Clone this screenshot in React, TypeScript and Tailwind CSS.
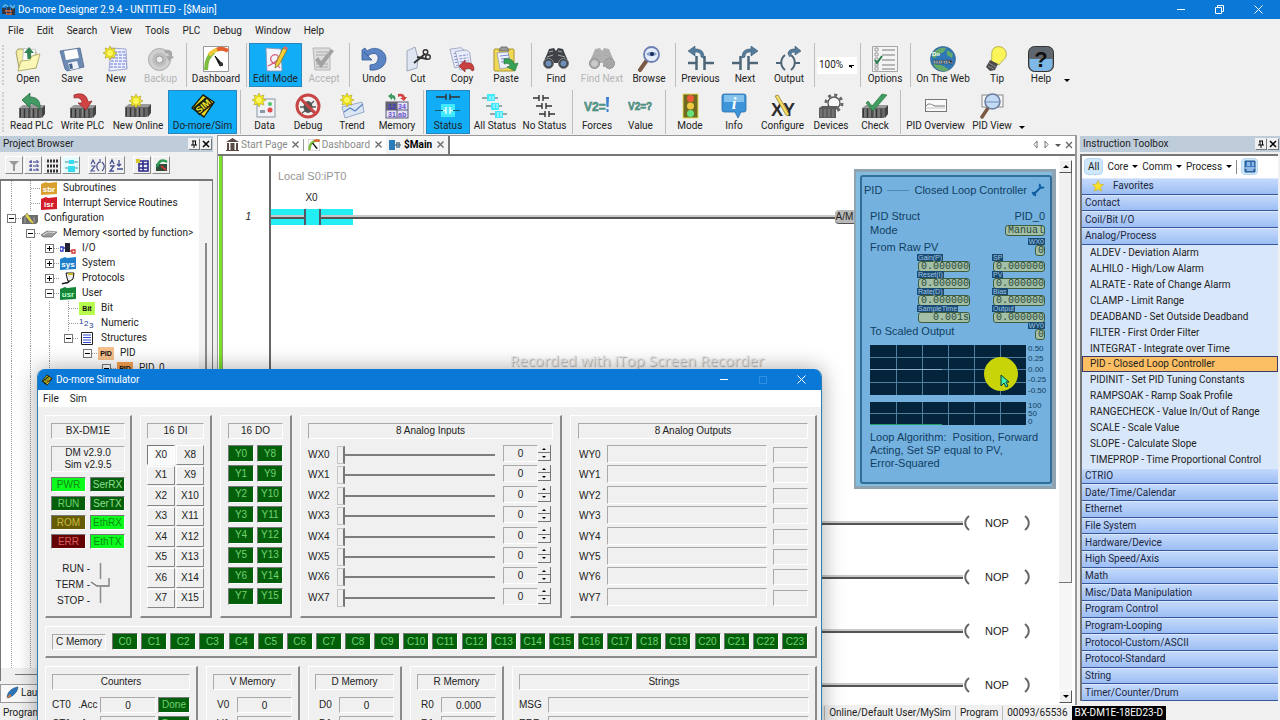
import React from 'react';

/* ---------- shared icon pieces ---------- */

const Svg = ({ children, className = 'h-[26px] w-[26px]', box = '0 0 26 26' }: { children: React.ReactNode; className?: string; box?: string }) => (
  <svg viewBox={box} className={`shrink-0 ${className}`} fill="none" aria-hidden="true">
    {children}
  </svg>
);

const Sun = ({ x = 0, y = 0 }: { x?: number; y?: number }) => (
  <g transform={`translate(${x} ${y})`}>
    <path d="M7 0l1.5 3.2L12 2l-1.2 3.5L14 7l-3.2 1.5L12 12l-3.5-1.2L7 14l-1.5-3.2L2 12l1.2-3.5L0 7l3.2-1.5L2 2l3.5 1.2z" fill="#fbf01a" stroke="#a79a20" strokeWidth=".6" />
    <circle cx="7" cy="7" r="3.6" fill="#fdf85a" stroke="#c9b400" strokeWidth=".5" />
  </g>
);

const Rack = ({ x = 0, y = 0 }: { x?: number; y?: number }) => (
  <g transform={`translate(${x} ${y})`}>
    <path d="M0 4l4-3h22l-3 3z" fill="#9a9a9a" />
    <path d="M0 4h23v9l-1 1H0z" fill="#666" />
    <path d="M23 4l3-3v9l-3 4z" fill="#444" />
    <path d="M1.5 5v8M5.5 5v9M10 5v9M14.500 5v9M19 5v9" stroke="#333" />
    <path d="M3 5v8M8 5v8M12.500 5v8M17 5v8" stroke="#888" />
  </g>
);

const Sheet = ({ x = 0, y = 0, tint = '#3a56d0' }: { x?: number; y?: number; tint?: string }) => (
  <g transform={`translate(${x} ${y})`}>
    <path d="M1 1h11l3 3v16H3z" fill="#e9edfb" stroke="#8a93b5" strokeWidth=".7" />
    <path d="M4 6h9M4 9h9M4 12h9M4 15h9M5 18h8" stroke={tint} strokeWidth=".9" strokeDasharray="3 1" />
  </g>
);

const Binoculars = ({ c = '#3f4246', lens = '#6f8fb8' }: { c?: string; lens?: string }) => (
  <g>
    <path d="M4 8l2-5 5-1 2 3 2-3 5 1 2 5 4 9-3 5h-5l-3-5h-4l-3 5H3l-3-5z" fill={c} />
    <circle cx="5.500" cy="17.500" r="5" fill={c} stroke="#8b8b8b" />
    <circle cx="20.500" cy="17.500" r="5" fill={c} stroke="#8b8b8b" />
    <circle cx="5.500" cy="17.500" r="3" fill={lens} />
    <circle cx="20.500" cy="17.500" r="3" fill={lens} />
    <path d="M6 6l4-1M15 5l4 1M4 11l6-2M15 9l7 2" stroke="#a9a9a9" />
  </g>
);

const Wires = ({ kind }: { kind: 'prev' | 'next' | 'out' }) => (
  <Svg>
    {kind === 'out' ? (
      <>
        <path d="M0 17h6M19 17h5" stroke="#4c6577" strokeWidth="2" />
        <path d="M9 9c-5 4-5 11 0 15M15 9c5 4 5 11 0 15" stroke="#4c6577" strokeWidth="2" />
        <path d="M12 8c0-4 3-5 7-5V0l6 5-6 4V6c-3 0-4 1-5 5z" fill="#547b9a" stroke="#395a73" strokeWidth=".6" />
      </>
    ) : (
      <>
        <path d="M0 17h8M17 17h9M8.500 10v14M16.500 10v14" stroke="#4c6577" strokeWidth="2.500" />
        {kind === 'prev' ? (
          <path d="M0 5l7-5v3c6 0 9 2 9 9l-3-1c0-4-2-5-6-5v4z" fill="#547b9a" stroke="#395a73" strokeWidth=".6" />
        ) : (
          <path d="M26 5l-7-5v3c-6 0-9 2-9 9l3-1c0-4 2-5 6-5v4z" fill="#547b9a" stroke="#395a73" strokeWidth=".6" />
        )}
      </>
    )}
  </Svg>
);

const Contact = ({ x, y, c }: { x: number; y: number; c: string }) => (
  <path d={`M${x} ${y}h6m4 0h6M${x + 6} ${y - 3}v6M${x + 10} ${y - 3}v6`} stroke={c} strokeWidth="1.400" />
);

const icons: Record<string, React.ReactNode> = {
  open: (
    <Svg>
      <path d="M1 6l2-3h5l2 3h11v16H4z" fill="#f3eda6" stroke="#938c4b" strokeWidth=".8" />
      <path d="M8 3h12v16H8z" fill="#fff" stroke="#a9a9a9" strokeWidth=".6" transform="rotate(5 14 10)" />
      <path d="M9 7l5-6 5 6h-3l.5 6h-4l-.5-6z" fill="#358455" />
      <path d="M3 25l3-10 9-1 2-4 8-2-4 14z" fill="#fbf7b6" stroke="#a9a155" strokeWidth=".8" />
    </Svg>
  ),
  save: (
    <Svg>
      <path d="M1 5l20-3 4 19-17 4-2-2z" fill="#6d8bb2" stroke="#4c688e" strokeWidth=".8" />
      <path d="M5 5l13-2 2 9-13 2z" fill="#fff" />
      <path d="M9 17l9-2 2 7-9 2z" fill="#eef2f8" />
      <path d="M10 18l3-.6 1 5-3 .6z" fill="#43618a" />
    </Svg>
  ),
  fresh: (
    <Svg>
      <path d="M8 2l15 1 1 20-18 2z" fill="#eceffd" stroke="#7d88c0" strokeWidth=".7" />
      <path d="M8 9h15M8 12h15M8 15h15M7 18h17M7 21h17M11 6h12" stroke="#6878d4" strokeWidth="1" strokeDasharray="3 1" />
      <Sun />
    </Svg>
  ),
  backup: (
    <Svg>
      <circle cx="11.500" cy="13.500" r="11" fill="#cfcfcf" stroke="#aaa" />
      <circle cx="11.500" cy="13.500" r="7" fill="#bdbdbd" />
      <circle cx="11.500" cy="13.500" r="3.500" fill="#eee" stroke="#999" />
      <path d="M16 4c6-1 9 1 8 6l2 1-5 4-3-5 3 0c0-2-1-3-4-3z" fill="#a8a8a8" />
    </Svg>
  ),
  gauge: (
    <Svg>
      <path d="M.5.500h25v25H.5z" fill="#fff" stroke="#999" />
      <path d="M3 24C3 14 6 9 11 6" stroke="#7cbc3e" strokeWidth="4" />
      <path d="M6 9C9 6 12 4 15 3.500" stroke="#efc93b" strokeWidth="4" />
      <path d="M14 3.500C18 2 21 2 25 5" stroke="#e56030" strokeWidth="4" />
      <path d="M12 10l8 9-3 1z" fill="#111" stroke="#111" />
      <circle cx="18" cy="18" r="2" fill="#333" />
    </Svg>
  ),
  edit: (
    <Svg>
      <path d="M3 2l15 1 1 22H4z" fill="#f4f4fb" stroke="#8c93b0" strokeWidth=".8" />
      <path d="M5 20c4-2 12-5 10-10-3-4-10 1-6 6 2 2 6 2 8 6" stroke="#d85a74" strokeWidth="1.200" />
      <path d="M20 2l4 2-8 15-4 3 1-5z" fill="#f4cf3a" stroke="#7f6d25" strokeWidth=".8" />
      <path d="M20 2l4 2 1-2-3-2z" fill="#df6d6d" />
    </Svg>
  ),
  accept: (
    <Svg>
      <path d="M2 2h17v22H4z" fill="#ddd" stroke="#b5b5b5" />
      <path d="M5 6h12M5 9h12M5 18h12M5 21h12" stroke="#aaa" />
      <path d="M4 14l6 8L23 5l-3-2-10 12-3-4z" fill="#a2a2a2" />
    </Svg>
  ),
  undo: (
    <Svg>
      <path d="M3 6l4 4c8-7 14 2 7 8l-5 1v5c9 1 16-4 16-11C25 4 14-1 6 5L4 2 1 4v10h10z" fill="#5b84c4" stroke="#365b98" strokeWidth=".8" />
    </Svg>
  ),
  cut: (
    <Svg>
      <path d="M2 5l8-4 3 11-1 10-10 3z" fill="#dfe5f1" stroke="#8b95aa" strokeWidth=".8" />
      <path d="M9 17l11-9M12 11l10 2" stroke="#333" strokeWidth="2" />
      <circle cx="20.500" cy="6" r="2.300" stroke="#333" strokeWidth="1.400" />
      <circle cx="23" cy="11" r="2.300" stroke="#333" strokeWidth="1.400" />
    </Svg>
  ),
  copy: (
    <Svg>
      <g transform="rotate(-8 10 10)">
        <Sheet x={1} y={1} tint="#7f8fc4" />
        <Sheet x={6} y={4} tint="#7f8fc4" />
      </g>
      <path d="M10 20l6-6v3c6-1 9 1 9 7l-2 1c-1-3-4-3-7-2v3z" fill="#c9413f" stroke="#8d2727" strokeWidth=".6" />
    </Svg>
  ),
  paste: (
    <Svg>
      <rect x="1" y="3" width="20" height="22" rx="1" fill="#f0d956" stroke="#a9932b" />
      <path d="M6 5l2-4h6l2 4z" fill="#9a9a9a" stroke="#555" strokeWidth=".7" />
      <path d="M4 7l11-1 3 15-11 2z" fill="#eef1fa" stroke="#8792b5" strokeWidth=".7" />
      <path d="M7 10l9-1M8 13l9-1M8 16l9-1" stroke="#7b8ccf" />
      <path d="M11 13c7-1 10 2 10 5l4-1-3 8-8-4 3-1c0-2-2-3-6-2z" fill="#35a255" stroke="#1e6c36" strokeWidth=".6" />
    </Svg>
  ),
  find: <Svg><Binoculars /></Svg>,
  findNext: (
    <Svg>
      <Binoculars c="#b0b0b0" lens="#cbcbcb" />
      <path d="M14 15h6v-3l6 6-6 6v-3h-6z" fill="#a6a6a6" />
    </Svg>
  ),
  browse: (
    <Svg>
      <path d="M11 14l-7 10" stroke="#7c5a45" strokeWidth="4" strokeLinecap="round" />
      <circle cx="15.500" cy="8.500" r="7.500" fill="#e4edfb" stroke="#6d7fb1" strokeWidth="1.800" />
      <path d="M10 8c3-3 8-3 11 0-3 3-8 3-11 0z" fill="#8ba3d2" />
      <circle cx="16" cy="8" r="2" fill="#1b2a55" />
    </Svg>
  ),
  options: (
    <Svg>
      <path d="M.5.500h25v25H.5z" fill="#f4f4f4" stroke="#a5a5a5" />
      <path d="M10 4h13M10 9h13M10 14h13M10 19h13M10 23h13" stroke="#7b7b7b" strokeWidth="1.200" />
      <path d="M3 2h3v3H3zM3 7h3v3H3zM3 12h3v3H3zM3 17h3v3H3zM3 21h3v3H3z" stroke="#888" strokeWidth=".8" />
      <path d="M3 14l2 3 5-7" stroke="#2c7d4d" strokeWidth="2" />
    </Svg>
  ),
  web: (
    <Svg>
      <circle cx="13" cy="13" r="12.500" fill="#2f78b8" stroke="#3e5f7c" strokeWidth=".7" />
      <path d="M4 6c4-4 8-5 12-4l-2 4-5 2-4 4-3-1zM17 4l6 4-1 4-5-3zM3 18c7 0 12 2 16 6-6 3-13 0-16-6z" fill="#63aa6b" />
      <text x="2" y="10" fontFamily="Liberation Sans" fontSize="6" fontWeight="700" fill="#fff">Do</text>
      <text x="13" y="18" textAnchor="middle" fontFamily="Liberation Sans" fontSize="8" fontWeight="700" fill="#fff" stroke="#222" strokeWidth=".4">more</text>
    </Svg>
  ),
  tip: (
    <Svg>
      <path d="M10 2c6-4 14 1 12 8-1 4-5 5-7 9l-8-4c2-4-1-9 3-13z" fill="#fbf55a" stroke="#a9a13b" strokeWidth=".8" />
      <path d="M6 14l8 4-3 6-5 1-4-4z" fill="#4b4b4b" />
      <path d="M5 17l7 4M4 20l6 3" stroke="#8b8b8b" />
    </Svg>
  ),
  help: (
    <Svg>
      <rect x=".5" y=".5" width="25" height="25" rx="6" fill="#60666d" stroke="#333" />
      <path d="M1.500 13h23v6a6 6 0 01-6 6h-11a6 6 0 01-6-6z" fill="#7db8e6" />
      <text x="13" y="21" textAnchor="middle" fontFamily="Liberation Sans" fontSize="22" fontWeight="700" fill="#111">?</text>
    </Svg>
  ),
  readPlc: (
    <Svg>
      <Rack y={11} />
      <path d="M3 7l8-7v4c8 0 11 5 10 13-2-4-5-6-10-6v4z" fill="#419963" stroke="#24633c" strokeWidth=".7" />
    </Svg>
  ),
  writePlc: (
    <Svg>
      <Rack y={11} />
      <path d="M4 2c8-3 13 0 14 7l4-1-6 9-8-7 4 0c0-4-3-6-8-5z" fill="#d24444" stroke="#8c2323" strokeWidth=".7" />
    </Svg>
  ),
  newOnline: (
    <Svg>
      <Rack y={10} />
      <Sun x={4} y={1} />
    </Svg>
  ),
  sim: (
    <Svg>
      <path d="M13 1l12 8-11 16L1 15z" fill="#1c1c10" />
      <path d="M13 3l10 6-9 14-11-8z" fill="#e4db25" />
      <g transform="rotate(-40 13 13)">
        <rect x="4" y="8" width="18" height="10" fill="#1c1c10" />
        <text x="13" y="16.500" textAnchor="middle" fontFamily="Liberation Sans" fontSize="9" fontWeight="700" fill="#f3ea2b">SIM</text>
      </g>
    </Svg>
  ),
  data: (
    <Svg>
      <rect x="5" y="6" width="18" height="18" fill="#f0f2f6" stroke="#8a93a5" />
      <circle cx="18" cy="11" r="2" fill="#55c46a" />
      <circle cx="18" cy="17" r="2.500" fill="#e24d4d" />
      <path d="M8 17h5v3H8z" fill="#8f98a9" />
      <Sun />
    </Svg>
  ),
  debug: (
    <Svg>
      <ellipse cx="13" cy="14" rx="4.500" ry="6" fill="#555" />
      <path d="M7 8l4 4M19 8l-4 4M5 14h16M7 20l4-3M19 20l-4-3" stroke="#555" strokeWidth="1.300" />
      <circle cx="13" cy="13" r="11" stroke="#c84545" strokeWidth="3" />
      <path d="M5 5l16 16" stroke="#c84545" strokeWidth="3" />
    </Svg>
  ),
  trend: (
    <Svg>
      <path d="M3 14l20-5 2 10-19 6z" fill="#dbe6f5" stroke="#8298ba" strokeWidth=".8" />
      <path d="M5 19l6-4 5 3 8-7" stroke="#5c83c2" strokeWidth="1.200" />
      <Sun x={1} />
    </Svg>
  ),
  memory: (
    <Svg>
      <rect x="2" y="9" width="22" height="16" fill="#e5e3f5" stroke="#5d5a78" />
      <path d="M2 9h11v8H2z" fill="#65636f" />
      <path d="M2 17h22M13 9v16" stroke="#5d5a78" />
      <text x="4" y="16" fontFamily="Liberation Sans" fontSize="7" fontWeight="700" fill="#3b3bd0">12</text>
      <text x="14" y="16" fontFamily="Liberation Sans" fontSize="7" fontWeight="700" fill="#6b52d0">34</text>
      <text x="4" y="24" fontFamily="Liberation Sans" fontSize="7" fontWeight="700" fill="#6b52d0">31</text>
      <text x="14" y="24" fontFamily="Liberation Sans" fontSize="7" fontWeight="700" fill="#6b52d0">ab</text>
      <path d="M4 3l4-3v2c3 0 4 2 3 6-1-2-2-3-3-3v2z" fill="#419963" />
      <path d="M14 1c4-1 6 0 7 3l2 0-3 4-4-3h2c0-2-2-2-4-1z" fill="#d24444" />
    </Svg>
  ),
  status: (
    <Svg>
      <Contact x={5} y={4} c="#333" />
      <path d="M1 4h4M21 4h4" stroke="#333" strokeWidth="1.400" />
      <rect x="6" y="11" width="14" height="13" fill="#42e9fb" />
      <path d="M0 17.500h8M18 17.500h7" stroke="#15606b" strokeWidth="1.200" />
      <path d="M11 14v7M15 14v7M8 17.500h3M15 17.500h3" stroke="#e8fdff" strokeWidth="1.500" />
    </Svg>
  ),
  allStatus: (
    <Svg>
      <path d="M5 1h8v7H5zM9 10h8v7H9zM13 18h8v7h-8z" fill="#42e9fb" />
      <path d="M0 5h5M13 5h3M4 13h5M17 13h3M8 21h5M21 21h4" stroke="#35646b" strokeWidth="1.200" />
      <path d="M8 3v4M11 3v4M12 11v4M15 11v4M16 19v5M19 19v5" stroke="#c8fbff" />
    </Svg>
  ),
  noStatus: (
    <Svg>
      <Contact x={1} y={5} c="#333" />
      <Contact x={4} y={13} c="#333" />
      <Contact x={7} y={21} c="#333" />
    </Svg>
  ),
  forces: (
    <Svg>
      <text x="0" y="18" fontFamily="Liberation Sans" fontSize="12" fontWeight="700" fill="#5ba394" stroke="#3b7a6d" strokeWidth=".5">V2=</text>
      <path d="M22 4h3l-.5 10h-2zM22.500 16h2v3h-2z" fill="#3c7fd0" />
    </Svg>
  ),
  value: (
    <Svg>
      <text x="0" y="17" fontFamily="Liberation Sans" fontSize="10" fontWeight="700" fill="#5ba394" stroke="#3b7a6d" strokeWidth=".5">V2=?</text>
    </Svg>
  ),
  mode: (
    <Svg>
      <rect x="6" y="1" width="15" height="24" fill="#6f6a20" stroke="#e6dc5b" />
      <circle cx="13.500" cy="5.500" r="3.500" fill="#ef5b3a" />
      <circle cx="13.500" cy="13" r="3.500" fill="#eec93f" />
      <circle cx="13.500" cy="20.500" r="3.500" fill="#65e07a" />
    </Svg>
  ),
  info: (
    <Svg>
      <path d="M3 1h20a2 2 0 012 2v14a2 2 0 01-2 2h-3l-3 6-3-6H3a2 2 0 01-2-2V3a2 2 0 012-2z" fill="#3d94d8" stroke="#2b6ea8" strokeWidth=".8" />
      <path d="M3 2h20v7H3z" fill="#85c3ee" />
      <text x="13" y="16" textAnchor="middle" fontFamily="Liberation Serif" fontStyle="italic" fontSize="17" fontWeight="700" fill="#fff">i</text>
    </Svg>
  ),
  configure: (
    <Svg>
      <text x="1" y="23" fontFamily="Liberation Sans" fontSize="18" fontWeight="700" fill="#2c2c2c">XY</text>
      <path d="M5 3l3-1 11 19-1 2-2-1z" fill="#f1dd63" stroke="#88762b" strokeWidth=".7" />
    </Svg>
  ),
  devices: (
    <Svg>
      <circle cx="16" cy="10" r="6" fill="#f5f5f5" stroke="#555" strokeWidth="1.300" />
      <circle cx="16" cy="10" r="8" stroke="#666" strokeWidth="3" strokeDasharray="3 3.280" />
      <g transform="translate(0 11)">
        <path d="M1 4l3-2h16l-2 3v9H1z" fill="#5d5d5d" />
        <path d="M3 5v8M7 5v8M11 5v8M15 5v8" stroke="#8b8b8b" />
      </g>
    </Svg>
  ),
  check: (
    <Svg>
      <Rack y={11} />
      <path d="M6 8l4 5L20 1l5 1-14 16-7-8z" fill="#3f9e5f" stroke="#26683b" strokeWidth=".6" />
    </Svg>
  ),
  pidOverview: (
    <Svg>
      <rect x="2.500" y="6.500" width="21" height="12" fill="#fafafa" stroke="#777" />
      <path d="M3 13c3-4 6-1 9 0h10" stroke="#777" />
      <path d="M3 15h19" stroke="#c5c5c5" />
    </Svg>
  ),
  pidView: (
    <Svg>
      <rect x="3" y="2" width="21" height="12" fill="#f6f6f6" stroke="#888" />
      <path d="M9 15L3 24" stroke="#7c5a45" strokeWidth="3.500" strokeLinecap="round" />
      <circle cx="13.500" cy="8.500" r="7.500" fill="#c3daf5" stroke="#6d7f9f" strokeWidth="1.600" />
      <path d="M6 9h15" stroke="#708ab5" />
    </Svg>
  ),
};

/* ---------- main toolbar ---------- */

type Tool = { icon: string; label: string; w: string; active?: boolean; off?: boolean } | 'sep' | 'zoom' | 'more';

const row1: Tool[] = [
  { icon: 'open', label: 'Open', w: 'w-[44px]' },
  { icon: 'save', label: 'Save', w: 'w-[44px]' },
  { icon: 'fresh', label: 'New', w: 'w-[44px]' },
  { icon: 'backup', label: 'Backup', w: 'w-[45px]', off: true },
  'sep',
  { icon: 'gauge', label: 'Dashboard', w: 'w-[54px]' },
  'sep',
  { icon: 'edit', label: 'Edit Mode', w: 'w-[53px]', active: true },
  { icon: 'accept', label: 'Accept', w: 'w-[44px]', off: true },
  'sep',
  { icon: 'undo', label: 'Undo', w: 'w-[44px]' },
  { icon: 'cut', label: 'Cut', w: 'w-[44px]' },
  { icon: 'copy', label: 'Copy', w: 'w-[44px]' },
  { icon: 'paste', label: 'Paste', w: 'w-[44px]' },
  'sep',
  { icon: 'find', label: 'Find', w: 'w-[44px]' },
  { icon: 'findNext', label: 'Find Next', w: 'w-[48px]', off: true },
  { icon: 'browse', label: 'Browse', w: 'w-[46px]' },
  'sep',
  { icon: 'prev', label: 'Previous', w: 'w-[45px]' },
  { icon: 'next', label: 'Next', w: 'w-[44px]' },
  { icon: 'out', label: 'Output', w: 'w-[44px]' },
  'sep',
  'zoom',
  'sep',
  { icon: 'options', label: 'Options', w: 'w-[44px]' },
  'sep',
  { icon: 'web', label: 'On The Web', w: 'w-[60px]' },
  { icon: 'tip', label: 'Tip', w: 'w-[48px]' },
  { icon: 'help', label: 'Help', w: 'w-[40px]' },
  'more',
];

const row2: Tool[] = [
  { icon: 'readPlc', label: 'Read PLC', w: 'w-[51px]' },
  { icon: 'writePlc', label: 'Write PLC', w: 'w-[51px]' },
  { icon: 'newOnline', label: 'New Online', w: 'w-[60px]' },
  { icon: 'sim', label: 'Do-more/Sim', w: 'w-[69px]', active: true },
  'sep',
  { icon: 'data', label: 'Data', w: 'w-[43px]' },
  { icon: 'debug', label: 'Debug', w: 'w-[44px]' },
  { icon: 'trend', label: 'Trend', w: 'w-[44px]' },
  { icon: 'memory', label: 'Memory', w: 'w-[46px]' },
  'sep',
  { icon: 'status', label: 'Status', w: 'w-[44px]', active: true },
  { icon: 'allStatus', label: 'All Status', w: 'w-[50px]' },
  { icon: 'noStatus', label: 'No Status', w: 'w-[49px]' },
  'sep',
  { icon: 'forces', label: 'Forces', w: 'w-[44px]' },
  { icon: 'value', label: 'Value', w: 'w-[43px]' },
  'sep',
  { icon: 'mode', label: 'Mode', w: 'w-[44px]' },
  { icon: 'info', label: 'Info', w: 'w-[44px]' },
  { icon: 'configure', label: 'Configure', w: 'w-[53px]' },
  { icon: 'devices', label: 'Devices', w: 'w-[44px]' },
  { icon: 'check', label: 'Check', w: 'w-[44px]' },
  'sep',
  { icon: 'pidOverview', label: 'PID Overview', w: 'w-[65px]' },
  { icon: 'pidView', label: 'PID View', w: 'w-[48px]' },
  'more',
];

const Caret = () => <span className="inline-block border-x-[3px] border-t-[3px] border-x-transparent border-t-black" />;

const ToolRow = ({ tools }: { tools: Tool[] }) => (
  <div className="flex h-[47px] items-center pl-[2px]">
    <span className="mr-[2px] h-[40px] w-[2px] border-l-2 border-dotted border-[#cfcfcf]" />
    {tools.map((t, i) => {
      if (t === 'sep') {
        return (
          <div key={i} className="flex h-[44px] w-[6px] shrink-0 justify-center">
            <span className="w-px bg-[#bdbdbd]" />
          </div>
        );
      }
      if (t === 'zoom') {
        return (
          <select key={i} aria-label="Zoom" className="h-[17px] w-[40px] shrink-0 appearance-none bg-white bg-[linear-gradient(45deg,transparent_50%,#000_50%),linear-gradient(-45deg,transparent_50%,#000_50%)] bg-[length:3px_3px] bg-[position:31px_8px,34px_8px] bg-no-repeat pl-[2px]">
            <option>100%</option>
          </select>
        );
      }
      if (t === 'more') {
        return (
          <button key={i} aria-label="More buttons" className="flex h-[44px] w-[12px] items-end justify-center pb-[5px]">
            <Caret />
          </button>
        );
      }
      return (
        <button
          key={i}
          disabled={t.off}
          className={`flex h-[44px] shrink-0 flex-col items-center border pt-[2px] whitespace-nowrap ${t.w} ${t.active ? 'border-[#2b86bd] bg-[#12adf7]' : 'border-transparent'} ${t.off ? 'text-[#b4b4b4]' : ''}`}
        >
          {t.icon === 'prev' || t.icon === 'next' || t.icon === 'out' ? <Wires kind={t.icon} /> : icons[t.icon]}
          <span className="leading-[14px]">{t.label}</span>
        </button>
      );
    })}
  </div>
);

/* ---------- project browser ---------- */

const PanelTitle = ({ children }: { children: React.ReactNode }) => (
  <div className="mt-px flex h-[16px] shrink-0 items-center bg-[#bfcddb] pr-[2px] pl-[3px]">
    <h2 className="grow text-[#222]">{children}</h2>
    <button aria-label="Pin" className="flex h-[11px] w-[11px] items-center justify-center bg-[#f0f0f0] shadow-[1px_1px_0_#777]">
      <Svg box="0 0 8 8" className="size-2">
        <path d="M2 1h4M3 1v4M5.500 1v4M1 5h6M4 5v3" stroke="#000" />
      </Svg>
    </button>
    <button aria-label="Close" className="ml-[1px] flex h-[11px] w-[11px] items-center justify-center bg-[#f0f0f0] shadow-[1px_1px_0_#777]">
      <Svg box="0 0 8 8" className="size-2">
        <path d="M1 1l6 6M7 1L1 7" stroke="#000" strokeWidth="1.500" />
      </Svg>
    </button>
  </div>
);

const Folder = ({ c, label, light = '#fff' }: { c: string; label: string; light?: string }) => (
  <Svg box="0 0 16 13" className="h-[13px] w-4">
    <path d="M0 2l5-2 2 1 9-1v12L0 13z" fill={c} />
    <text x="8" y="10" textAnchor="middle" fontFamily="Liberation Sans" fontSize="8" fontWeight="700" fill={light}>{label}</text>
  </Svg>
);

const Tag = ({ c, label }: { c: string; label: string }) => (
  <Svg box="0 0 16 13" className="h-[13px] w-4">
    <path d="M0 0h16v13H0z" fill={c} />
    <text x="8" y="9" textAnchor="middle" fontFamily="Liberation Sans" fontSize="7" fontWeight="700" fill="#111">{label}</text>
  </Svg>
);

type Node = { guides: boolean[]; toggle?: '+' | '-'; icon: React.ReactNode; label: string };

const tree: Node[] = [
  { guides: [true], icon: <Folder c="#d9a02f" label="sbr" />, label: 'Subroutines' },
  { guides: [true], icon: <Folder c="#d41d2b" label="isr" />, label: 'Interrupt Service Routines' },
  {
    guides: [],
    toggle: '-',
    icon: (
      <Svg box="0 0 16 13" className="h-[13px] w-4">
        <path d="M0 5l3-2h13v7l-2 2H0z" fill="#6d6d6d" />
        <path d="M3 5v6M8 5v6M12 5v6" stroke="#aaa" />
        <path d="M5 1l7 10-1 1-3-2-5-6z" fill="#e2d44c" stroke="#555" strokeWidth=".5" />
      </Svg>
    ),
    label: 'Configuration',
  },
  {
    guides: [true],
    toggle: '-',
    icon: (
      <Svg box="0 0 16 13" className="h-[13px] w-4">
        <path d="M0 8l6-4 10 1-5 5H2z" fill="#9b9b9b" stroke="#555" strokeWidth=".6" />
        <path d="M2 8l5-3 7 .5" stroke="#ddd" />
      </Svg>
    ),
    label: 'Memory <sorted by function>',
  },
  {
    guides: [true, true],
    toggle: '+',
    icon: (
      <Svg box="0 0 16 13" className="h-[13px] w-4">
        <path d="M5 1h5v9H5z" fill="#223" />
        <path d="M0 5h3v4H0zM3 6h2" stroke="#2b3dc9" strokeWidth="1.300" />
        <path d="M12 8h3v3h-3zM10 9h2" stroke="#d23535" strokeWidth="1.300" />
      </Svg>
    ),
    label: 'I/O',
  },
  { guides: [true, true], toggle: '+', icon: <Folder c="#1f7fcb" label="sys" />, label: 'System' },
  {
    guides: [true, true],
    toggle: '+',
    icon: (
      <Svg box="0 0 16 13" className="h-[13px] w-4">
        <path d="M6 1h8l-1 6-3 2H8L7 6z" fill="#eee" stroke="#111" />
        <path d="M8 1h5v2H8z" fill="#c9b822" />
        <path d="M9 9c0 3-5 1-7 3" stroke="#111" strokeWidth="1.500" />
      </Svg>
    ),
    label: 'Protocols',
  },
  { guides: [true, true], toggle: '-', icon: <Folder c="#16853a" label="usr" light="#b8ffc9" />, label: 'User' },
  { guides: [true, true, true], icon: <Tag c="#b6fb4d" label="Bit" />, label: 'Bit' },
  {
    guides: [true, true, true],
    icon: (
      <Svg box="0 0 16 13" className="h-[13px] w-4">
        <text x="0" y="7" fontFamily="Liberation Sans" fontSize="8" fill="#223a8a">1</text>
        <text x="5" y="9" fontFamily="Liberation Sans" fontSize="8" fill="#223a8a">2</text>
        <text x="10" y="11" fontFamily="Liberation Sans" fontSize="8" fill="#223a8a">3</text>
      </Svg>
    ),
    label: 'Numeric',
  },
  {
    guides: [true, true, true],
    toggle: '-',
    icon: (
      <Svg box="0 0 16 13" className="h-[13px] w-4">
        <path d="M2.500.500h11v12h-11z" fill="#fff" stroke="#222" />
        <path d="M4 3h8M4 5.500h8M4 8h8M4 10.500h8" stroke="#3446c9" />
      </Svg>
    ),
    label: 'Structures',
  },
  { guides: [true, true, true, false], toggle: '-', icon: <Tag c="#f5c08b" label="PID" />, label: 'PID' },
  { guides: [true, true, true, false, false], toggle: '-', icon: <Tag c="#f5a052" label="PID" />, label: 'PID_0' },
];

const Guide = ({ on }: { on: boolean }) => (
  <span className="flex h-full w-[19px] shrink-0 justify-center">{on && <span className="border-l border-dotted border-[#9a9a9a]" />}</span>
);

const TreeRow = ({ node }: { node: Node }) => (
  <li className="flex h-[15px] items-center whitespace-nowrap">
    {node.guides.map((g, i) => (
      <Guide key={i} on={g} />
    ))}
    <span className="flex h-full w-[19px] shrink-0 items-center justify-end">
      {node.toggle ? (
        <button className="flex size-[9px] items-center justify-center border border-[#777] bg-white" aria-label={`Toggle ${node.label}`}>
          <Svg box="0 0 7 7" className="size-[7px]">
            <path d={node.toggle === '+' ? 'M1 3.500h5M3.500 1v5' : 'M1 3.500h5'} stroke="#000" />
          </Svg>
        </button>
      ) : (
        <span className="h-full border-l border-dotted border-[#9a9a9a]" />
      )}
      <span className={`border-t border-dotted border-[#9a9a9a] ${node.toggle ? 'w-[5px]' : 'w-[9px]'}`} />
    </span>
    <span className="ml-px flex">{node.icon}</span>
    <span className="ml-[6px]">{node.label}</span>
  </li>
);

const browserTools = [
  <path key="0" d="M2 3h10L8 7v6H6V7z" fill="#999" />,
  <path key="1" d="M3 4h10M3 8h10M3 12h10M5 2v12M11 2v12" stroke="#33388c" strokeDasharray="3 1" />,
  <path key="2" d="M2 3h11M2 8h11M2 13h11" stroke="#333" strokeWidth="3" strokeDasharray="2 1" />,
  <g key="3">
    <path d="M1 4h13M1 10h13" stroke="#4b8f99" />
    <path d="M5 2h5v4H5zM4 8h7v6H4z" fill="#35dcef" />
  </g>,
  <path key="4" d="M1 6l2-4 2 4M1 8h4l-4 5h4M9 4c-3 3-3 6 0 9M12 4c3 3 3 6 0 9M10 1v4" stroke="#47508f" strokeWidth="1.200" />,
  <path key="5" d="M1 6l2-4 2 4M1 8h4l-4 5h4M10 2v6m-2-2l2 2 2-2M8 11h6" stroke="#47508f" strokeWidth="1.300" />,
  <g key="6">
    <path d="M4 3h9v10H4zM4 6h9M4 10h9M8 3v10" stroke="#2f2a8c" strokeWidth="1.600" />
    <path d="M1 1h4v4H1z" fill="#d8c62c" />
  </g>,
  <g key="7">
    <path d="M2 6h11v7H2z" fill="#2f4a38" />
    <path d="M3 9c2-7 6-8 10-5" stroke="#2c9a4f" strokeWidth="2.500" />
    <path d="M7 8l5 4" stroke="#c83a3a" strokeWidth="2" />
  </g>,
];

const ProjectBrowser = () => (
  <aside className="flex w-[213px] shrink-0 flex-col bg-[#f0f0f0]">
    <PanelTitle>Project Browser</PanelTitle>
    <div className="flex h-[27px] shrink-0 items-center pl-[5px]">
      {browserTools.map((p, i) => (
        <button
          key={i}
          aria-label={`Browser tool ${i + 1}`}
          className={`mr-px flex size-[18px] items-center justify-center border border-t-white border-l-white border-r-[#888] border-b-[#888] ${i === 3 ? 'bg-[#e2fbfd]' : ''} ${i === 4 || i === 6 ? 'ml-[7px]' : ''}`}
        >
          <Svg box="0 0 15 15" className="size-[15px]">{p}</Svg>
        </button>
      ))}
    </div>
    <div className="flex min-h-0 grow flex-col border-t-2 border-r border-l border-[#777] bg-white">
      <div className="flex min-h-0 grow">
        <div className="flex min-w-0 grow flex-col overflow-hidden">
          <ul className="pl-px">
            {tree.map((n) => (
              <TreeRow key={n.label} node={n} />
            ))}
          </ul>
          <div className="flex grow pl-px">
            <Guide on />
            <Guide on />
            <Guide on />
          </div>
        </div>
        <div className="flex w-[13px] shrink-0 justify-center bg-[#f2f2f2] pt-[62px]">
          <span className="w-[2px] bg-[#8a8a8a]" />
        </div>
      </div>
      <div className="flex h-[13px] items-center bg-[#f0f0f0] px-[14px]">
        <span className="h-px w-full bg-[#777]" />
      </div>
    </div>
    <div className="flex h-[24px] shrink-0 items-center">
      <button className="flex h-[19px] items-center border border-[#999] bg-[#f8f8f8] px-[4px]">
        <Svg box="0 0 14 14" className="size-[14px]">
          <path d="M2 11c1-6 5-9 11-10-1 6-5 9-10 11z" fill="#2b76b8" stroke="#1b4a77" strokeWidth=".6" />
          <path d="M1 13l4-5 1 2z" fill="#f07c28" />
        </Svg>
        <span className="ml-[2px]">Launch</span>
      </button>
    </div>
  </aside>
);

/* ---------- ladder editor ---------- */

const CloseX = ({ className = '' }: { className?: string }) => (
  <Svg box="0 0 7 7" className={`size-[7px] ${className}`}>
    <path d="M.5.500l6 6M6.500.500l-6 6" stroke="#666" strokeWidth="1.200" />
  </Svg>
);

const DocTabs = () => (
  <div className="flex h-[20px] shrink-0 items-center border-b-2 border-[#777] bg-white pr-[2px] pl-[8px] text-[#8a8a8a]">
    <button className="flex items-center">
      <Svg box="0 0 13 13" className="size-[13px]">
        <path d="M0 4l6.500-4L13 4zM1 5h2v7H1zM4.500 5h4v7h-4zM10 5h2v7h-2zM0 12h13v1H0z" fill="#5b4b44" />
      </Svg>
      <span className="ml-[2px]">Start Page</span>
      <CloseX className="ml-[4px]" />
    </button>
    <span className="mx-[4px] h-3 w-px bg-[#999]" />
    <button className="flex items-center">
      <Svg box="0 0 26 26" className="size-[12px]">
        <path d="M0 0h26v26H0z" fill="#fff" stroke="#666" />
        <path d="M3 24C3 10 10 3 24 3" stroke="#7cbc3e" strokeWidth="5" />
        <path d="M13 4C18 2 21 2 25 5" stroke="#e56030" strokeWidth="5" />
        <path d="M10 9l10 12" stroke="#111" strokeWidth="3" />
      </Svg>
      <span className="ml-[2px]">Dashboard</span>
      <CloseX className="ml-[5px]" />
    </button>
    <button className="ml-[4px] flex h-[18px] items-center border-r-2 border-[#777] bg-[#f4f4f4] pr-[4px] pl-[2px] font-bold text-black">
      <Svg box="0 0 13 12" className="h-[12px] w-[13px]">
        <path d="M1 1h6v10H1z" fill="#2a7bb8" />
        <path d="M7 6h2M9 3v6M11 3v6M11 6h2" stroke="#2b4b66" strokeWidth="1.200" />
      </Svg>
      <span className="ml-[3px]">$Main</span>
      <CloseX className="ml-[5px]" />
    </button>
    <span className="grow" />
    <Svg box="0 0 40 10" className="h-[10px] w-[40px]">
      <path d="M4 1v7L1 4.500zM12 1v7l3-3.500z" stroke="#777" />
      <path d="M22 4h6l-3 3z" fill="#555" />
      <path d="M33 2l6 6M39 2l-6 6" stroke="#666" strokeWidth="1.300" />
    </Svg>
  </div>
);

const Wire = () => <span className="h-[4px] grow border-b-2 border-[#555] bg-[#c9c9c9]" />;

const Lcd = ({ children, className = '' }: { children: React.ReactNode; className?: string }) => (
  <output className={`block h-[11px] rounded-[3px] border border-[#3d5c40] bg-[#a3bfa6] text-right font-['Liberation_Mono'] text-[10px] leading-[9px] text-[#2b4a3c] ${className}`}>
    {children}
  </output>
);

const LcdLabel = ({ children }: { children: React.ReactNode }) => (
  <span className="block h-[7px] w-fit bg-[#1b4a70] px-px text-[7px] leading-[7px] text-[#9fc8e6]">{children}</span>
);

const pidFields: [string, string][] = [
  ['Gain(P)', '0.000000'],
  ['SP', '0.000000'],
  ['Reset(I)', '0.000000'],
  ['PV', '0.000000'],
  ['Rate(D)', '0.000000'],
  ['Bias', '0.000000'],
  ['SampleTime', '0.001s'],
  ['Output', '0.000000'],
];

const PidBox = () => (
  <div className="mt-[13px] h-[320px] w-[202px] shrink-0 border-t-[3px] border-r-[4px] border-b-[3px] border-l-2 border-[#8fa3b0] bg-[#84bcdf] pt-[3px] pb-[2px] pl-[4px] text-[#103f63]">
    <div className="flex h-full flex-col rounded-[3px] border-2 border-[#2f6f98] bg-[#75b1de] pr-[5px] pl-[8px] text-[11px] leading-[13px]">
      <div className="-ml-[6px] flex h-[27px] items-center">
        <span>PID</span>
        <span className="mx-[5px] h-px grow bg-[#4d89b0]" />
        <span>Closed Loop Controller</span>
        <Svg box="0 0 14 14" className="ml-[4px] size-[14px]">
          <path d="M2 12l8-8M9 1c-1 2 1 5 4 3M1 10c2-1 4 1 3 3" stroke="#0f5fa5" strokeWidth="2" />
        </Svg>
      </div>
      <div className="mt-[6px] flex h-[14px] items-center justify-between">
        <span>PID Struct</span>
        <span>PID_0</span>
      </div>
      <div className="flex h-[14px] items-center justify-between">
        <span>Mode</span>
        <Lcd className="w-[40px]">Manual</Lcd>
      </div>
      <div className="flex h-[16px] items-start justify-between">
        <span className="mt-[3px]">From Raw PV</span>
        <span className="flex flex-col items-end">
          <LcdLabel>WX0</LcdLabel>
          <Lcd className="w-[10px]">0</Lcd>
        </span>
      </div>
      <div className="ml-[47px] grid h-[68px] grid-cols-[53px_53px] grid-rows-4 justify-between">
        {pidFields.map(([label, value]) => (
          <div key={label} className="h-[17px]">
            <LcdLabel>{label}</LcdLabel>
            <Lcd className="ml-px">{value}</Lcd>
          </div>
        ))}
      </div>
      <div className="flex h-[18px] items-start justify-between">
        <span className="mt-[3px]">To Scaled Output</span>
        <span className="flex flex-col items-end">
          <LcdLabel>WY0</LcdLabel>
          <Lcd className="w-[10px]">0</Lcd>
        </span>
      </div>
      <div className="mt-[5px] flex gap-[2px]">
        <svg viewBox="0 0 156 50" className="h-[50px] w-[156px] shrink-0" aria-hidden="true">
          <path d="M0 0h156v50H0z" fill="#04243c" />
          <path d="M26.500 0v50M52.500 0v50M78.500 0v50M104.500 0v50M130.500 0v50M0 12.500h156M0 24.500h156M0 37.500h156" stroke="#4f7f9c" />
          <path d="M0 24.500h72" stroke="#8fb0c4" />
        </svg>
        <ul className="flex flex-col justify-between text-[8px] leading-[8px] whitespace-nowrap">
          <li>0.50</li>
          <li>0.25</li>
          <li>0.00</li>
          <li>-0.25</li>
          <li>-0.50</li>
        </ul>
      </div>
      <div className="mt-[7px] flex gap-[2px]">
        <svg viewBox="0 0 156 23" className="h-[23px] w-[156px] shrink-0" aria-hidden="true">
          <path d="M0 0h156v23H0z" fill="#04243c" />
          <path d="M26.500 0v23M52.500 0v23M78.500 0v23M104.500 0v23M130.500 0v23M0 11.500h156" stroke="#4f7f9c" />
          <path d="M0 22.500h72" stroke="#21a06a" />
        </svg>
        <ul className="flex flex-col justify-between text-[8px] leading-[8px]">
          <li>100</li>
          <li>50</li>
          <li>0</li>
        </ul>
      </div>
      <p className="mt-[5px] -mr-[4px]">
        Loop Algorithm:&nbsp; Position, Forward Acting, Set SP equal to PV,
        <br />
        Error-Squared
      </p>
    </div>
  </div>
);

const NopRung = () => (
  <div className="flex h-[54px] items-center pr-[28px]">
    <Wire />
    <Svg box="0 0 8 16" className="h-4 w-2">
      <path d="M6 1C1 5 1 11 6 15" stroke="#666" strokeWidth="2" />
    </Svg>
    <span className="w-[52px] text-center text-[11px]">NOP</span>
    <Svg box="0 0 8 16" className="h-4 w-2">
      <path d="M2 1c5 4 5 10 0 14" stroke="#666" strokeWidth="2" />
    </Svg>
  </div>
);

const LadderEditor = () => (
  <main className="ml-[4px] flex min-w-0 grow flex-col border-t border-r-2 border-l border-[#999] bg-white">
    <DocTabs />
    <div className="flex min-h-0 grow bg-white pl-px font-['Liberation_Sans',sans-serif]">
      <div className="w-[4px] shrink-0 border-r border-[#8fa37a] bg-[#7be02a]" />
      <div className="w-[46px] shrink-0 pt-[54px] pr-[18px] text-right italic">1</div>
      <div className="min-w-0 grow overflow-hidden border-l-2 border-[#666]">
        <div className="flex h-[340px]">
          <div className="flex min-w-0 grow flex-col">
            <p className="mt-[13px] ml-[7px] text-[11px] leading-[14px] text-[#949494]">Local S0:iPT0</p>
            <p className="mt-[8px] w-[81px] text-center leading-[14px]">X0</p>
            <div className="mt-[4px] flex items-center">
              <span className="flex h-[16px] w-[82px] items-center bg-[#23eef3]">
                <Wire />
                <span className="flex h-full w-[17px] border-x-2 border-[#556]" />
                <Wire />
              </span>
              <Wire />
              <span className="h-[14px] w-[19px] shrink-0 rounded-l-sm border-b border-[#555] bg-[#b9b9b9] text-center leading-[14px]">A/M</span>
            </div>
          </div>
          <PidBox />
          <div className="w-[3px]" />
        </div>
        <NopRung />
        <NopRung />
        <NopRung />
        <NopRung />
      </div>
      <div className="mr-[3px] mb-[2px] flex w-[13px] shrink-0 flex-col bg-[#f6f6f6]">
        <button aria-label="Scroll up" className="mt-[4px] flex h-[13px] items-center justify-center border border-t-white border-l-white border-r-[#555] border-b-[#555] bg-[#f0f0f0]">
          <span className="border-x-[3px] border-b-[3px] border-x-transparent border-b-black" />
        </button>
        <div className="h-[410px] border-r border-b border-[#777] bg-[#f0f0f0]" />
        <span className="grow" />
        <button aria-label="Scroll down" className="flex h-[13px] items-center justify-center border border-t-white border-l-white border-r-[#555] border-b-[#555] bg-[#f0f0f0]">
          <Caret />
        </button>
      </div>
    </div>
  </main>
);

/* ---------- instruction toolbox ---------- */

const analogItems = [
  'ALDEV - Deviation Alarm',
  'ALHILO - High/Low Alarm',
  'ALRATE - Rate of Change Alarm',
  'CLAMP - Limit Range',
  'DEADBAND - Set Outside Deadband',
  'FILTER - First Order Filter',
  'INTEGRAT - Integrate over Time',
  'PID - Closed Loop Controller',
  'PIDINIT - Set PID Tuning Constants',
  'RAMPSOAK - Ramp Soak Profile',
  'RANGECHECK - Value In/Out of Range',
  'SCALE - Scale Value',
  'SLOPE - Calculate Slope',
  'TIMEPROP - Time Proportional Control',
];

const lowerGroups = [
  'CTRIO',
  'Date/Time/Calendar',
  'Ethernet',
  'File System',
  'Hardware/Device',
  'High Speed/Axis',
  'Math',
  'Misc/Data Manipulation',
  'Program Control',
  'Program-Looping',
  'Protocol-Custom/ASCII',
  'Protocol-Standard',
  'String',
  'Timer/Counter/Drum',
];

const Group = ({ children }: { children: React.ReactNode }) => (
  <button className="flex min-h-0 w-full flex-1 items-center border-t border-b border-t-[#dbe8fd] border-b-[#37569b] bg-linear-to-b from-[#c3d9fb] to-[#9dbef4] pl-[3px] text-left leading-[12px] text-[#1c2740]">
    {children}
  </button>
);

const InstructionToolbox = () => (
  <aside className="ml-[3px] flex w-[200px] shrink-0 flex-col bg-[#f0f0f0]">
    <PanelTitle>Instruction Toolbox</PanelTitle>
    <div className="mt-[2px] mr-[2px] flex grow flex-col border-t-2 border-l-2 border-[#777]">
      <div className="flex h-[22px] shrink-0 items-center bg-white pl-[2px]">
        <button className="h-[17px] rounded-sm border border-[#b5d8f5] bg-[#cfe7fb] px-[3px]">All</button>
        {['Core', 'Comm', 'Process'].map((m) => (
          <button key={m} className="ml-[4px] flex items-center gap-[4px]">
            {m}
            <Caret />
          </button>
        ))}
        <span className="mx-[4px] h-[14px] w-px bg-[#888]" />
        <button aria-label="Show descriptions" className="flex h-[17px] w-[17px] items-center justify-center rounded-sm border border-[#b5d8f5] bg-[#cfe7fb]">
          <Svg box="0 0 12 13" className="h-[13px] w-[12px]">
            <path d="M1 1h10v11H1z" fill="#3e7fc8" stroke="#1f4f86" />
            <path d="M3 3h3M3 5h3M8 3h2M8 5h2M1 8h10M3 10h6" stroke="#e4f0ff" />
          </Svg>
        </button>
      </div>
      <Group>
        <Svg box="0 0 24 24" className="mr-[9px] ml-[7px] size-[12px]">
          <path d="M12 1l3.300 7.300 8 .9-6 5.300 1.700 8L12 18.300 5 22.500l1.700-8-6-5.300 8-.9z" fill="#f9e227" stroke="#c1a512" />
        </Svg>
        Favorites
      </Group>
      <Group>Contact</Group>
      <Group>Coil/Bit I/O</Group>
      <Group>Analog/Process</Group>
      <ul className="flex h-[223px] shrink-0 flex-col bg-[#d9e7fa]">
        {analogItems.map((item, i) => (
          <li key={item} className="flex min-h-0 flex-1">
            <button className={`flex w-full items-center border pl-[7px] text-left leading-[13px] whitespace-nowrap ${i === 7 ? 'border-[#3a3a6b] bg-[#fdbf63]' : 'border-transparent'}`}>{item}</button>
          </li>
        ))}
      </ul>
      {lowerGroups.map((g) => (
        <Group key={g}>{g}</Group>
      ))}
    </div>
    <div className="h-[4px]" />
  </aside>
);

/* ---------- simulator window ---------- */

const Panel = ({ children, className = '' }: { children: React.ReactNode; className?: string }) => (
  <section className={`border-t border-r-2 border-b-2 border-l border-t-white border-r-[#8a8a8a] border-b-[#8a8a8a] border-l-white ${className}`}>{children}</section>
);

const sunken = 'border border-t-[#a9a9a9] border-l-[#a9a9a9] border-r-white border-b-white';

const PanelHead = ({ children, className = '' }: { children: React.ReactNode; className?: string }) => (
  <h3 className={`flex h-[16px] items-center justify-center ${sunken} ${className}`}>{children}</h3>
);

const Led = ({ children, color = 'bg-[#045f0b] text-[#6fd46f]', className = 'h-[17px]' }: { children: React.ReactNode; color?: string; className?: string }) => (
  <span className={`flex items-center justify-center border border-t-[#777] border-l-[#777] border-r-white border-b-white leading-[14px] ${color} ${className}`}>{children}</span>
);

const range8 = [0, 1, 2, 3, 4, 5, 6, 7];

const leds: [string, string][] = [
  ['PWR', 'bg-[#0cfb1d] text-[#0c8a15]'],
  ['SerRX', 'bg-[#045f0b] text-[#8fe08f]'],
  ['RUN', 'bg-[#045f0b] text-[#6fd46f]'],
  ['SerTX', 'bg-[#045f0b] text-[#8fe08f]'],
  ['ROM', 'bg-[#655c05] text-[#c5b83d]'],
  ['EthRX', 'bg-[#0cfb1d] text-[#0c8a15]'],
  ['ERR', 'bg-[#650404] text-[#e05a5a]'],
  ['EthTX', 'bg-[#0cfb1d] text-[#0c8a15]'],
];

const MemoryPanel = ({ title, rows, value, className }: { title: string; rows: string[]; value: string; className: string }) => (
  <Panel className={`px-[6px] pt-[7px] ${className}`}>
    <PanelHead>{title}</PanelHead>
    <div className="mt-[7px] flex flex-col gap-[3px]">
      {rows.map((r) => (
        <label key={r} className="flex items-center">
          <span className="w-[24px] pl-[4px]">{r}</span>
          <input defaultValue={value} className={`h-[16px] w-0 grow text-center ${sunken}`} />
        </label>
      ))}
    </div>
  </Panel>
);

const Simulator = () => (
  <div className="absolute top-[369px] left-[37px] w-[785px] overflow-hidden rounded-t-lg border-x border-[#2b7fb5] bg-[#f0f0f0] shadow-[0_0_22px_rgba(0,0,0,0.35)]">
    <header className="flex h-[21px] items-center bg-[#0a78d7] pl-[3px] text-white">
      <span className="flex [&>svg]:size-[12px]">{icons.sim}</span>
      <h2 className="ml-[3px] grow">Do-more Simulator</h2>
      <button aria-label="Minimize" className="flex w-[39px] justify-center"><span className="h-px w-[8px] bg-white" /></button>
      <button aria-label="Maximize" disabled className="flex w-[39px] justify-center"><span className="size-[8px] border border-[#2f8fe0]" /></button>
      <button aria-label="Close" className="flex w-[39px] justify-center">
        <Svg box="0 0 9 9" className="size-[9px]"><path d="M.5.500l8 8M8.500.500l-8 8" stroke="#fff" /></Svg>
      </button>
    </header>
    <nav className="flex h-[17px] items-center gap-[11px] bg-white pl-[5px]">
      <button>File</button>
      <button>Sim</button>
    </nav>
    <div className="flex h-[330px] flex-col gap-[8px] overflow-hidden pt-[8px] pr-[4px] pl-[7px] font-['Liberation_Sans',sans-serif] text-[10px]">
      <div className="flex h-[203px] shrink-0 gap-[8px]">
        <Panel className="w-[87px] px-[5px] pt-[7px]">
          <PanelHead>BX-DM1E</PanelHead>
          <div className={`mt-[7px] flex h-[26px] flex-col items-center leading-[12px] ${sunken}`}>
            <span>DM v2.9.0</span>
            <span>Sim v2.9.5</span>
          </div>
          <div className="mt-[5px] grid grid-cols-2 gap-x-[4px] gap-y-[4px]">
            {leds.map(([label, color]) => (
              <Led key={label} color={color} className="h-[15px]">{label}</Led>
            ))}
          </div>
          <div className="mt-[12px] flex">
            <div className="flex w-[39px] flex-col text-right leading-[16px]">
              <span>RUN -</span>
              <span>TERM -</span>
              <span>STOP -</span>
            </div>
            <Svg box="0 0 20 44" className="h-[44px] w-[20px]">
              <path d="M10.500 2v16M10.500 26v16" stroke="#8a8a8a" strokeWidth="1.500" />
              <path d="M1 21l6 4h12v-8" stroke="#777" strokeWidth="1.300" />
            </Svg>
          </div>
        </Panel>
        <Panel className="w-[72px] px-[6px] pt-[7px]">
          <PanelHead>16 DI</PanelHead>
          <div className="mt-[6px] grid h-[163px] grid-cols-2 grid-rows-8 gap-x-px gap-y-px">
            {range8.flatMap((n) => [n, n + 8]).map((n) => (
              <button
                key={n}
                className={`border text-center ${n === 0 ? 'border-t-[#777] border-l-[#777] border-r-white border-b-white bg-[#fafafa]' : 'border-t-white border-l-white border-r-[#888] border-b-[#888]'}`}
              >
                X{n}
              </button>
            ))}
          </div>
        </Panel>
        <Panel className="w-[72px] px-[7px] pt-[7px]">
          <PanelHead>16 DO</PanelHead>
          <div className="mt-[6px] grid h-[163px] grid-cols-2 grid-rows-8 gap-x-[3px]">
            {range8.flatMap((n) => [n, n + 8]).map((n) => (
              <Led key={n}>Y{n}</Led>
            ))}
          </div>
        </Panel>
        <Panel className="w-[262px] px-[7px] pt-[7px]">
          <PanelHead>8 Analog Inputs</PanelHead>
          <div className="mt-[6px] grid h-[163px] grid-rows-8">
            {range8.map((n) => (
              <div key={n} className="flex items-start">
                <label htmlFor={`wx${n}`} className="w-[29px] pt-[3px]">WX{n}</label>
                <input
                  id={`wx${n}`}
                  type="range"
                  defaultValue={0}
                  className="h-[20px] w-0 grow appearance-none bg-transparent [&::-webkit-slider-runnable-track]:h-[2px] [&::-webkit-slider-runnable-track]:bg-[#7d7d7d] [&::-webkit-slider-thumb]:-mt-[8px] [&::-webkit-slider-thumb]:h-[18px] [&::-webkit-slider-thumb]:w-[8px] [&::-webkit-slider-thumb]:appearance-none [&::-webkit-slider-thumb]:border [&::-webkit-slider-thumb]:border-r-2 [&::-webkit-slider-thumb]:border-[#c5c5c5] [&::-webkit-slider-thumb]:border-r-[#777] [&::-webkit-slider-thumb]:bg-[#f0f0f0]"
                />
                <input aria-label={`WX${n} value`} defaultValue="0" className={`ml-[8px] h-[17px] w-[35px] text-center ${sunken}`} />
                <span className="mr-[2px] flex flex-col">
                  <button aria-label="Increase" className="flex h-[8px] w-[13px] items-center justify-center border-r border-b border-[#777]">
                    <span className="border-x-2 border-b-2 border-x-transparent border-b-black" />
                  </button>
                  <button aria-label="Decrease" className="flex h-[8px] w-[13px] items-center justify-center border-r border-b border-[#777]">
                    <span className="border-x-2 border-t-2 border-x-transparent border-t-black" />
                  </button>
                </span>
              </div>
            ))}
          </div>
        </Panel>
        <Panel className="grow px-[7px] pt-[7px]">
          <PanelHead>8 Analog Outputs</PanelHead>
          <div className="mt-[6px] grid h-[163px] grid-rows-8">
            {range8.map((n) => (
              <div key={n} className="flex items-start">
                <span className="w-[29px] pt-[3px] pl-px">WY{n}</span>
                <output className={`h-[18px] grow ${sunken}`} />
                <output className={`mt-[2px] ml-[6px] h-[16px] w-[35px] ${sunken}`} />
              </div>
            ))}
          </div>
        </Panel>
      </div>
      <Panel className="flex h-[32px] shrink-0 items-center pr-[7px] pl-[6px]">
        <PanelHead className="w-[54px]">C Memory</PanelHead>
        <div className="ml-[6px] flex grow justify-between">
          {Array.from({ length: 24 }, (_, n) => (
            <Led key={n} className="h-[17px] w-[26px]">C{n}</Led>
          ))}
        </div>
      </Panel>
      <div className="flex h-[120px] shrink-0 gap-[8px]">
        <Panel className="w-[153px] px-[6px] pt-[7px]">
          <PanelHead>Counters</PanelHead>
          <div className="mt-[7px] flex flex-col gap-[3px]">
            {['CT0', 'CT1', 'CT2', 'CT3'].map((c) => (
              <label key={c} className="flex items-center">
                <span className="w-[26px]">{c}</span>
                <span className="w-[22px]">.Acc</span>
                <input defaultValue="0" className={`h-[16px] w-0 grow text-center ${sunken}`} />
                <Led className="ml-[2px] h-[16px] w-[32px]">Done</Led>
              </label>
            ))}
          </div>
        </Panel>
        <MemoryPanel className="w-[94px]" title="V Memory" rows={['V0', 'V1', 'V2']} value="0" />
        <MemoryPanel className="w-[94px]" title="D Memory" rows={['D0', 'D1', 'D2']} value="0" />
        <MemoryPanel className="w-[94px]" title="R Memory" rows={['R0', 'R1', 'R2']} value="0.000" />
        <Panel className="grow px-[6px] pt-[7px]">
          <PanelHead>Strings</PanelHead>
          <div className="mt-[7px] flex flex-col gap-[3px]">
            {['MSG', 'ERR', 'SS0'].map((s) => (
              <label key={s} className="flex items-center">
                <span className="w-[29px]">{s}</span>
                <input className={`h-[16px] w-0 grow ${sunken}`} />
              </label>
            ))}
          </div>
        </Panel>
      </div>
    </div>
  </div>
);

/* ---------- shell ---------- */

const App = () => {
  return (
    <div className="relative flex h-screen flex-col overflow-hidden bg-[#f0f0f0] font-['Roboto',sans-serif] text-[10px] leading-[14px] text-[#222]">
      <header className="flex h-[19px] shrink-0 items-center bg-[#0a78d7] pl-[2px] text-white">
        <Svg box="0 0 13 13" className="size-[13px]">
          <path d="M0 5h4v6H0zM5 4h3v8H5zM9 5h4v7H9z" fill="#33363b" />
          <path d="M1 4c2-3 4-2 5 0M8 2l3 3 2-3" stroke="#67b6dc" strokeWidth="1.500" />
          <path d="M3 8h7M4 11h6" stroke="#e0663c" strokeWidth="1.500" />
        </Svg>
        <h1 className="ml-[3px] grow">Do-more Designer 2.9.4 - UNTITLED - [$Main]</h1>
        <button aria-label="Minimize" className="flex w-[39px] justify-center"><span className="h-px w-[8px] bg-white" /></button>
        <button aria-label="Restore" className="flex w-[39px] justify-center">
          <Svg box="0 0 9 9" className="size-[9px]"><path d="M.5 2.500h6v6h-6zM2.500 2.500v-2h6v6h-2" stroke="#fff" /></Svg>
        </button>
        <button aria-label="Close" className="mr-[2px] flex w-[39px] justify-center">
          <Svg box="0 0 9 9" className="size-[9px]"><path d="M.5.500l8 8M8.500.500l-8 8" stroke="#fff" /></Svg>
        </button>
      </header>
      <nav className="flex h-[23px] shrink-0 items-center gap-[13px] pl-[8px]">
        {['File', 'Edit', 'Search', 'View', 'Tools', 'PLC', 'Debug', 'Window', 'Help'].map((m) => (
          <button key={m}>{m}</button>
        ))}
      </nav>
      <ToolRow tools={row1} />
      <ToolRow tools={row2} />
      <div className="flex min-h-0 grow">
        <ProjectBrowser />
        <LadderEditor />
        <InstructionToolbox />
      </div>
      <footer className="flex h-[15px] shrink-0 items-center pr-[114px] pl-[3px]">
        <span className="grow">Program</span>
        <span className="border-l border-[#bbb] px-[4px]">Online/Default User/MySim</span>
        <span className="border-l border-[#bbb] px-[4px]">Program</span>
        <span className="border-l border-[#bbb] px-[4px]">00093/65536</span>
        <span className="bg-black px-[3px] text-white">BX-DM1E-18ED23-D</span>
      </footer>

      <p className="absolute top-[350px] left-[510px] font-['Open_Sans',sans-serif] text-[15px] leading-[20px] whitespace-nowrap text-[#ececec] [text-shadow:1px_1px_1px_#aaa]">
        Recorded with iTop Screen Recorder
      </p>
      <Simulator />
      <div className="pointer-events-none absolute top-[357px] left-[984px] size-[34px] rounded-full bg-[#c8d408]">
        <Svg box="0 0 10 14" className="mt-[17px] ml-[16px] h-[14px] w-[10px]">
          <path d="M1 1v11l3-3 2 4 2-1-2-4h3z" fill="#3df0b0" stroke="#083b3b" />
        </Svg>
      </div>
    </div>
  );
};

export default App;
